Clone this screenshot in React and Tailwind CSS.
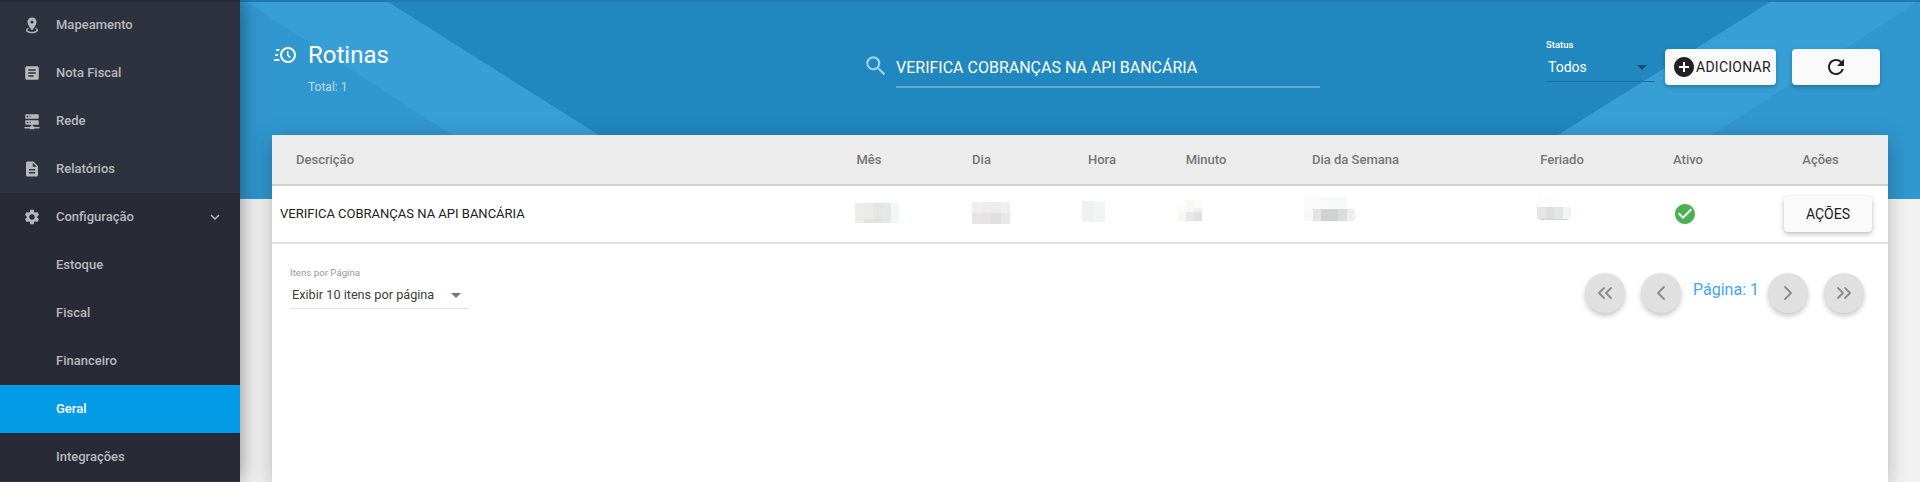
import React from "react";
import { MdArticle, MdDescription, MdSettings, MdKeyboardArrowDown, MdSearch, MdAddCircle, MdRefresh, MdCheckCircle } from "react-icons/md";
import { ChevronLeft, ChevronRight, ChevronsLeft, ChevronsRight } from "lucide-react";

const MarkerRadius = (p) => (
  <svg viewBox="0 0 24 24" width="18" height="18" fill="currentColor" {...p}>
    <path d="M12,2C15.31,2 18,4.66 18,7.95C18,12.41 12,19 12,19C12,19 6,12.41 6,7.95C6,4.66 8.69,2 12,2M12,6A2,2 0 0,0 10,8A2,2 0 0,0 12,10A2,2 0 0,0 14,8A2,2 0 0,0 12,6M20,19C20,21.21 16.42,23 12,23C7.58,23 4,21.21 4,19C4,17.71 5.22,16.56 7.11,15.83L7.75,16.74C6.67,17.19 6,17.81 6,18.5C6,19.88 8.69,21 12,21C15.31,21 18,19.88 18,18.5C18,17.81 17.33,17.19 16.25,16.74L16.89,15.83C18.78,16.56 20,17.71 20,19Z" />
  </svg>
);
const ServerNetwork = (p) => (
  <svg viewBox="0 0 24 24" width="18" height="18" fill="currentColor" {...p}>
    <path d="M13,19H14A1,1 0 0,1 15,20H22V22H15A1,1 0 0,1 14,23H10A1,1 0 0,1 9,22H2V20H9A1,1 0 0,1 10,19H11V17H4A1,1 0 0,1 3,16V12A1,1 0 0,1 4,11H20A1,1 0 0,1 21,12V16A1,1 0 0,1 20,17H13V19M4,3H20A1,1 0 0,1 21,4V8A1,1 0 0,1 20,9H4A1,1 0 0,1 3,8V4A1,1 0 0,1 4,3M9,7H10V5H9V7M9,15H10V13H9V15M5,5V7H7V5H5M5,13V15H7V13H5Z" />
  </svg>
);
const ClockFast = (p) => (
  <svg viewBox="0 0 24 24" width="24" height="24" fill="currentColor" {...p}>
    <path d="M15,4A8,8 0 0,1 23,12A8,8 0 0,1 15,20A8,8 0 0,1 7,12A8,8 0 0,1 15,4M15,6A6,6 0 0,0 9,12A6,6 0 0,0 15,18A6,6 0 0,0 21,12A6,6 0 0,0 15,6M14,8H15.5V11.78L17.83,14.11L16.77,15.17L14,12.4V8M2,18A1,1 0 0,1 1,17A1,1 0 0,1 2,16H5.83C6.14,16.71 6.54,17.38 7,18H2M3,13A1,1 0 0,1 2,12A1,1 0 0,1 3,11H5.05L5,12L5.05,13H3M4,8A1,1 0 0,1 3,7A1,1 0 0,1 4,6H7C6.54,6.62 6.14,7.29 5.83,8H4Z" />
  </svg>
);

const Caret = ({ className }) => (
  <svg width="10" height="5" viewBox="0 0 10 5" className={className} fill="currentColor">
    <path d="M0 0h10L5 5z" />
  </svg>
);

const Item = ({ icon: Icon, label, dark, active, chevron }) => (
  <div className={`flex h-12 items-center ${active ? "bg-[#039be5] text-white" : "text-[#b8b9bd]"} ${dark && !active ? "bg-[#282b36]" : ""}`}>
    <div className="flex w-[56px] justify-center pl-[8px]">{Icon ? <Icon size={18} width={18} height={18} /> : null}</div>
    <span className="flex-1 text-[13px] font-medium">{label}</span>
    {chevron ? <MdKeyboardArrowDown size={18} className="mr-[16px]" /> : null}
  </div>
);

const Blob = ({ w, rects, className }) => (
  <svg width={w} height="57" className={className}>
    {rects.map((r, i) => (
      <rect key={i} x={r[0]} y={r[1]} width={r[2]} height={r[3]} fill={r[4]} />
    ))}
  </svg>
);

const columns = "grid grid-cols-[528px_138px_87px_154px_54px_278px_102px_150px_125px]";

const PageBtn = ({ Icon, className }) => (
  <button className={`flex h-10 w-10 shrink-0 items-center justify-center rounded-full bg-[#e0e0e0] text-[#8a8a8a] shadow-[0_3px_5px_rgba(0,0,0,0.22)] ${className || ""}`}>
    <Icon size={24} strokeWidth={1.8} />
  </button>
);

export default function App() {
  return (
    <div className="flex h-[482px] w-[1920px] overflow-hidden bg-[#f2f2f2] font-['Roboto',sans-serif]">
      <aside className="relative z-10 w-60 shrink-0 bg-[#2e323f] pt-[1px] shadow-[0_0_20px_rgba(0,0,0,0.45)]">
        <div className="absolute top-0 left-0 h-[2px] w-full bg-[#282b36]" />
        <Item icon={MarkerRadius} label="Mapeamento" />
        <Item icon={MdArticle} label="Nota Fiscal" />
        <Item icon={ServerNetwork} label="Rede" />
        <Item icon={MdDescription} label="Relatórios" />
        <Item icon={MdSettings} label="Configuração" dark chevron />
        <Item label="Estoque" dark />
        <Item label="Fiscal" dark />
        <Item label="Financeiro" dark />
        <Item label="Geral" active />
        <Item label="Integrações" dark />
      </aside>

      <main className="flex min-w-0 flex-1 flex-col">
        <header className="relative h-[199px] shrink-0 overflow-hidden border-t-2 border-[#1c7cb1] bg-[#2088bf]">
          <svg className="absolute top-[-2px] left-0" width="1680" height="199" viewBox="0 0 1680 199">
            <polygon points="3,0 145,0 400,161 400,199 0,199 0,0" fill="#389fd6" />
            <polygon points="0,0 3,0 212,135 300,199 0,199" fill="#3097cf" />
            <polygon points="1533,0 1680,0 1680,199 1216,199" fill="#389fd6" />
            <polygon points="1680,0 1680,199 1373,199" fill="#3097cf" />
          </svg>
          <div className="relative flex pl-[33px]">
            <div className="w-[594px] text-white">
              <div className="mt-[35px] flex items-center">
                <ClockFast />
                <span className="ml-[11px] text-[24px] leading-[36px]">Rotinas</span>
              </div>
              <div className="mt-[6px] pl-[35px] text-[12px] leading-[16px] text-white/70">Total: 1</div>
            </div>
            <div className="mt-[51px] flex w-[453px] items-start">
              <MdSearch size={26} className="ml-[-4px] text-white/60" />
              <div className="ml-[7px] h-[35px] flex-1 border-b-2 border-white/30 text-[16px] leading-[29px] font-normal text-white">VERIFICA COBRANÇAS NA API BANCÁRIA</div>
            </div>
            <div className="mt-[37px] ml-[226px] h-[43px] w-[109px] border-b border-[#1a6fa0] text-white">
              <div className="text-[9.5px] leading-[12px] font-medium">Status</div>
              <div className="mt-[6px] flex items-center justify-between pr-[8px] pl-[2px]">
                <span className="text-[14px] leading-[20px]">Todos</span>
                <Caret className="text-[#1c4c6c]" />
              </div>
            </div>
            <button className="mt-[47px] ml-[10px] flex h-9 w-[111px] items-center rounded-[4px] bg-[#fafafa] pl-[8px] text-[14px] font-normal text-[#212121] shadow-[0_2px_4px_rgba(0,0,0,0.25)]">
              <MdAddCircle size={24} className="-ml-[1px]" />
              <span className="tracking-[0.25px]">ADICIONAR</span>
            </button>
            <button className="mt-[47px] ml-[16px] flex h-9 w-[88px] items-center justify-center rounded-[4px] bg-[#fafafa] text-[#212121] shadow-[0_2px_4px_rgba(0,0,0,0.25)]">
              <MdRefresh size={24} />
            </button>
          </div>
        </header>

        <section className="relative mx-[32px] -mt-[64px] flex-1 bg-white shadow-[0_5px_20px_rgba(0,0,0,0.25)]">
          <div className={`${columns} h-[51px] items-center border-b-2 border-[#d0d0d0] bg-[#ececec] text-[13px] font-medium text-[#767676]`}>
            <span className="pl-[24px]">Descrição</span>
            <span className="text-center">Mês</span>
            <span className="text-center">Dia</span>
            <span className="text-center">Hora</span>
            <span className="text-center">Minuto</span>
            <span className="pr-[33px] text-center">Dia da Semana</span>
            <span className="text-center">Feriado</span>
            <span className="text-center">Ativo</span>
            <span className="pr-[10px] text-center">Ações</span>
          </div>

          <div className={`${columns} h-[58px] items-center border-b-2 border-[#e2e2e2]`}>
            <span className="pb-[2px] pl-[8px] text-[13px] text-[#212121]">VERIFICA COBRANÇAS NA API BANCÁRIA</span>
            <Blob w={44} className="ml-[55px]" rects={[[0,17,9,20,"#ecece8"],[9,17,9,20,"#eaeaea"],[18,17,9,20,"#e4e6e6"],[27,17,9,20,"#e8e7e7"],[36,17,8,20,"#f3f6f7"],[9,33,18,4,"#e2e2e0"]]} />
            <Blob w={38} className="ml-[34px]" rects={[[0,16,10,11,"#f0eeee"],[10,16,9,11,"#eeecec"],[19,16,10,11,"#ececec"],[29,16,9,11,"#efefef"],[0,27,10,11,"#e6e4e4"],[10,27,9,11,"#e4e2e2"],[19,27,10,11,"#e1dfdf"],[29,27,9,11,"#e6e8e8"]]} />
            <Blob w={23} className="ml-[57px]" rects={[[0,15,12,21,"#f1f1f0"],[12,15,11,21,"#f3f4f4"]]} />
            <Blob w={24} className="ml-[-1px]" rects={[[0,20,8,10,"#fbfaf7"],[8,14,8,12,"#f7f7f6"],[16,14,8,8,"#fafafa"],[16,22,8,10,"#eef0f0"],[8,26,8,9,"#e8e9e6"],[16,26,8,9,"#dde2e2"],[0,26,8,9,"#f7f6f1"]]} />
            <Blob w={51} className="ml-[71px]" rects={[[0,11,17,12,"#fafafa"],[17,11,26,12,"#f8f9f9"],[0,23,9,12,"#f8f8f8"],[9,23,8,12,"#e4e4e4"],[17,23,17,12,"#cfd1d4"],[34,23,9,12,"#dcdcdc"],[43,23,8,12,"#eeeeee"]]} />
            <Blob w={34} className="ml-[26px]" rects={[[0,9,17,12,"#fcfcfc"],[0,21,9,12,"#e5e5e3"],[9,21,8,12,"#dfdfda"],[17,21,9,12,"#e3e6e4"],[26,21,8,12,"#eff4f5"],[3,33,28,1,"#d2d3db"]]} />
            <MdCheckCircle size={24} className="mb-[2px] ml-[60px] text-[#4caf50]" />
            <div className="flex justify-end pr-[16px] pb-[1px]">
              <button className="flex h-9 w-[88px] items-center justify-center rounded-[4px] bg-[#fafafa] text-[14px] text-[#212121] shadow-[0_2px_5px_rgba(0,0,0,0.28)]">AÇÕES</button>
            </div>
          </div>

          <div className="flex items-start justify-between pt-[21px] pr-[24px] pl-[18px]">
            <div className="mt-[1px] h-[43px] w-[179px] border-b border-[#e0e0e0]">
              <div className="text-[9.7px] leading-[14px] text-[#9a9a9a]">Itens por Página</div>
              <div className="mt-[5px] flex items-center justify-between pr-[8px] pl-[2px]">
                <span className="text-[12.7px] leading-[20px] text-[#3c3c3c]">Exibir 10 itens por página</span>
                <Caret className="text-[#777777]" />
              </div>
            </div>
            <div className="mt-[8px] flex items-start">
              <PageBtn Icon={ChevronsLeft} />
              <PageBtn Icon={ChevronLeft} className="ml-[16px]" />
              <span className="mt-[5px] mr-[10px] ml-[12px] w-[65px] text-[16px] leading-[24px] whitespace-nowrap text-[#42a5f5]">Página: 1</span>
              <PageBtn Icon={ChevronRight} />
              <PageBtn Icon={ChevronsRight} className="ml-[16px]" />
            </div>
          </div>
        </section>
      </main>
    </div>
  );
}
